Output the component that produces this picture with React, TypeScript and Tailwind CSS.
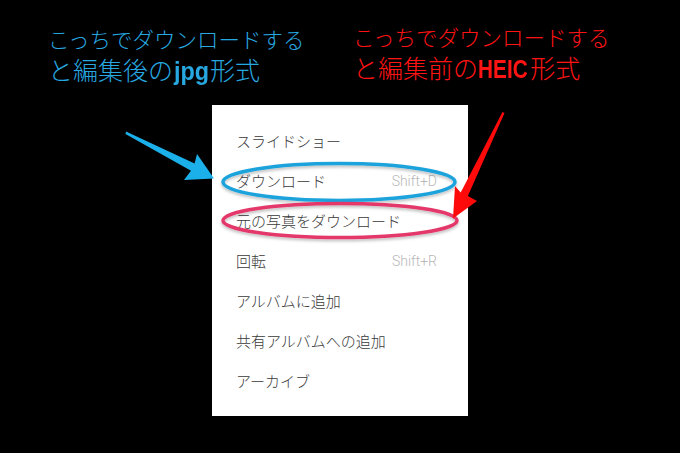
import React from "react";

const cjk = { fontFamily: '"Noto Sans CJK JP", "Noto Sans", sans-serif' };
const menuFont = { fontFamily: 'Roboto, "Noto Sans CJK JP", sans-serif' };
const heavy = { fontFamily: '"Liberation Sans", Arial, sans-serif' };

const items: { label: string; shortcut?: string }[] = [
  { label: "スライドショー" },
  { label: "ダウンロード", shortcut: "Shift+D" },
  { label: "元の写真をダウンロード" },
  { label: "回転", shortcut: "Shift+R" },
  { label: "アルバムに追加" },
  { label: "共有アルバムへの追加" },
  { label: "アーカイブ" },
];

export default function App() {
  return (
    <div className="relative w-[680px] h-[453px] bg-black overflow-hidden" style={cjk}>
      <div className="flex h-[105px] pt-[22px] pl-[48px] box-border">
        <div className="w-[305px] pt-[2px] text-[#27a8e0]">
          <div className="text-[21.5px] leading-[30px] whitespace-nowrap font-light">こっちでダウンロードする</div>
          <div className="text-[25px] leading-[30px] whitespace-nowrap font-light">
            と編集後の
            <span className="inline-block origin-left scale-x-[0.9] text-[26px] font-bold mr-[-3px] ml-[1px]" style={heavy}>
              jpg
            </span>
            形式
          </div>
        </div>
        <div className="text-[#ff1414]">
          <div className="text-[21.5px] leading-[30px] whitespace-nowrap font-light">こっちでダウンロードする</div>
          <div className="text-[25px] leading-[30px] whitespace-nowrap font-light">
            と編集前の
            <span className="inline-block origin-left scale-x-[0.8] text-[26px] font-bold mr-[-10px]" style={heavy}>
              HEIC
            </span>
            形式
          </div>
        </div>
      </div>

      <div className="ml-[212px] w-[256px] h-[311px] bg-white py-4 box-border" style={menuFont}>
        {items.map((it) => (
          <div key={it.label} className="h-10 flex items-center justify-between pl-6 pr-[31px]">
            <span className="text-[15px] text-[#3a3a3a] font-light" style={cjk}>
              {it.label}
            </span>
            {it.shortcut && (
              <span className="text-[14px] text-[#b8b8b8] font-light" style={{ fontFamily: "Roboto, sans-serif" }}>
                {it.shortcut}
              </span>
            )}
          </div>
        ))}
      </div>

      <svg
        className="absolute left-0 top-0 pointer-events-none"
        width="680"
        height="453"
        viewBox="0 0 680 453"
      >
        <defs>
          <filter id="sh" x="-10%" y="-30%" width="120%" height="160%">
            <feDropShadow dx="0" dy="2" stdDeviation="1.5" floodColor="#000" floodOpacity="0.25" />
          </filter>
        </defs>
        <ellipse cx="339" cy="182" rx="116" ry="18.5" fill="none" stroke="#1ea3dc" strokeWidth="3.5" filter="url(#sh)" />
        <ellipse cx="340" cy="220.5" rx="117" ry="17" fill="none" stroke="#e4386b" strokeWidth="3.5" filter="url(#sh)" />
        <polygon
          points="126,131.5 125.5,134 191,170.7 184,180 214,178.5 197,154 194.6,163.5"
          fill="#1cb0ea"
        />
        <polygon
          points="502.5,112 504.5,113 467.9,196 477,201 453,218.5 455,186 460.7,192.6"
          fill="#ff0a0a"
        />
      </svg>
    </div>
  );
}
